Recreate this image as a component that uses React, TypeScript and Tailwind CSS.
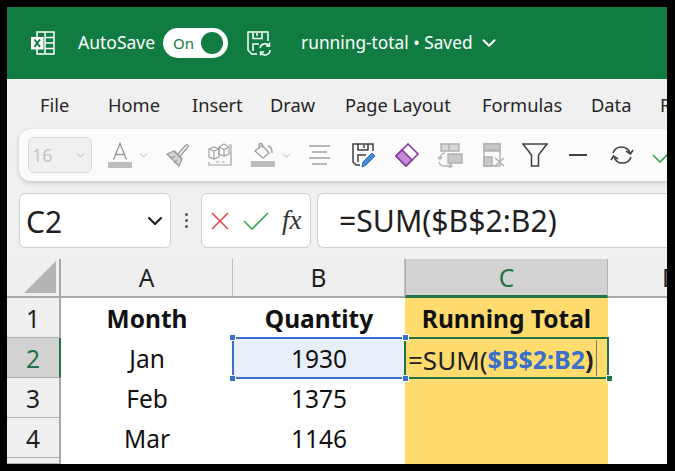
import { ChevronDown } from "lucide-react";

const font = { fontFamily: '"Noto Sans", "Open Sans", sans-serif' };

const tabs = [
  { label: "File", width: "w-[68px]" },
  { label: "Home", width: "w-[84px]" },
  { label: "Insert", width: "w-[78px]" },
  { label: "Draw", width: "w-[75px]" },
  { label: "Page Layout", width: "w-[137px]" },
  { label: "Formulas", width: "w-[109px]" },
  { label: "Data", width: "w-[69px]" },
  { label: "Review", width: "w-[80px]" },
];

function ExcelLogo() {
  return (
    <svg width="24" height="24" viewBox="0 0 24 24" fill="none" stroke="white" strokeWidth="1.500">
      <path d="M6 1h17v22H6z" />
      <path d="M14 1v22M14 6.500h9M14 12h9M14 17.500h9" />
      <path d="M0 6h12.500v12.500H0z" fill="white" stroke="none" />
      <path d="M3.500 8.500l5.500 7.500M9 8.500l-5.500 7.500" stroke="#107C41" strokeWidth="2" />
    </svg>
  );
}

function SaveSync() {
  return (
    <svg width="26" height="26" viewBox="0 0 26 26" fill="none" stroke="white" strokeWidth="1.500">
      <path d="M11 24H5.500L2 20V2h20v9" />
      <path d="M7 2v6.500h9V2M11 3v3" />
      <path d="M7 21v-7h6" />
      <path d="M14 18a5 5 0 0 1 9-2M24 20a5 5 0 0 1-9 3" />
      <path d="M23.500 12.500V16h-3.500M14.500 25.500V22h3.500" />
    </svg>
  );
}

function Toggle() {
  return (
    <div className="flex h-[30px] w-[65px] items-center justify-between rounded-full bg-white pl-[10px] pr-[5px]">
      <span className="text-[15px] leading-none text-[#107C41]">On</span>
      <span className="h-[22px] w-[22px] rounded-full bg-[#107C41]" />
    </div>
  );
}

function ColorA() {
  return (
    <svg width="24" height="26" viewBox="0 0 24 26" fill="none">
      <path d="M5.500 17.500L12 1.500l6.500 16M8 12.500h8" stroke="#9a9a9a" strokeWidth="1.400" />
      <rect x="0" y="20" width="24" height="6" fill="#bdbdbd" />
    </svg>
  );
}

function Brush() {
  return (
    <svg width="24" height="24" viewBox="0 0 24 24" fill="none" stroke="#9a9a9a" strokeWidth="1.300">
      <path d="M1 11l7-3 8 8-3 7z" fill="#d4d4d4" />
      <path d="M8 8l8 8M12 11l8-9c1-1 3 1 2 2l-8 9" />
      <path d="M5 15l4-2M8 20l3-3" />
    </svg>
  );
}

function Boxes() {
  return (
    <svg width="24" height="24" viewBox="0 0 24 24" fill="none" stroke="#a3a3a3" strokeWidth="1.200">
      <path d="M1 6l5-2 5 2v8l-5 2-5-2zM1 6l5 2 5-2M6 8v8" />
      <path d="M11 4l5-3 5 3v7l-5 2-5-2zM11 4l5 2.500L21 4M16 6.500V13" />
      <path d="M21 2h2v20H1v-3M8 19h3M14 19h3" />
    </svg>
  );
}

function Bucket() {
  return (
    <svg width="24" height="26" viewBox="0 0 24 26" fill="none" stroke="#a3a3a3" strokeWidth="1.400">
      <path d="M4 9l7-6 7 8-6 5z" />
      <path d="M8 7V2.500a2 2 0 0 1 3.500 0V6" />
      <path d="M17 4c3 0 4 3 4 7" />
      <rect x="0" y="19" width="24" height="6" fill="#bdbdbd" stroke="none" />
    </svg>
  );
}

function AlignLines() {
  return (
    <svg width="23" height="22" viewBox="0 0 23 22" stroke="#a3a3a3" strokeWidth="1.600">
      <path d="M1 2h21M4 8h15M1 14h21M4 20h15" />
    </svg>
  );
}

function SavePen() {
  return (
    <svg width="26" height="26" viewBox="0 0 26 26" fill="none">
      <path d="M10 23H6l-3-3V2h20v7" stroke="#3f3f3f" strokeWidth="1.500" />
      <path d="M8 2v6h10V2M14 3v3M8 20v-7h8" stroke="#3f3f3f" strokeWidth="1.500" />
      <path d="M12 25l1-5 9-9 3 3-9 9z" fill="#3f8fd8" stroke="#1f6fb8" strokeWidth="1" />
    </svg>
  );
}

function Eraser() {
  return (
    <svg width="24" height="24" viewBox="0 0 24 24" fill="none">
      <path d="M1 13L13 1l10 10-12 12z" fill="white" stroke="#8a3aa0" strokeWidth="1.600" />
      <path d="M1 13l6-6 10 10-6 6z" fill="#c58ad6" stroke="#8a3aa0" strokeWidth="1.600" />
    </svg>
  );
}

function TableMove() {
  return (
    <svg width="26" height="25" viewBox="0 0 26 25" fill="none" stroke="#b0b0b0" strokeWidth="1.400">
      <path d="M4 1h18v7H4zM12 1v7" fill="#d8d8d8" />
      <path d="M11 11h14v9H11z" fill="#c9c9c9" />
      <path d="M8 10a6 6 0 0 0-5 6l2-2M3 16l-2-2M2 19a5 5 0 0 0 6 4h7M12 20l3 3-3 2" />
    </svg>
  );
}

function TableX() {
  return (
    <svg width="22" height="24" viewBox="0 0 22 24" fill="none" stroke="#b0b0b0" strokeWidth="1.400">
      <path d="M1 1h16v22H1z" />
      <path d="M1 1h16v6H1zM1 14h8v9H1z" fill="#c9c9c9" />
      <path d="M1 8h16M12 15l9 8M21 15l-9 8" />
    </svg>
  );
}

function Funnel() {
  return (
    <svg width="26" height="24" viewBox="0 0 26 24" fill="none" stroke="#3f3f3f" strokeWidth="1.500">
      <path d="M1 1h24l-8.500 11v11h-7V12z" />
    </svg>
  );
}

function Refresh() {
  return (
    <svg width="24" height="22" viewBox="0 0 24 22" fill="none" stroke="#3f3f3f" strokeWidth="1.600">
      <path d="M3 9a9 9 0 0 1 17 0M21 13a9 9 0 0 1-17 0" />
      <path d="M16 7l4.500 3L23 6M8 15l-4.500-3L1 16" />
    </svg>
  );
}

function SmallCaret() {
  return <ChevronDown size={13} strokeWidth={1.500} className="text-[#a8a8a8]" />;
}

function Toolbar() {
  return (
    <div className="flex h-[52px] items-center rounded-l-[12px] bg-[#fbfbfb] pl-[9px] shadow-[0_2px_5px_rgba(0,0,0,0.18)]">
      <div className="flex h-[36px] w-[64px] shrink-0 items-center justify-between rounded-[6px] border border-[#dcdcdc] bg-[#f0f0f0] pl-[3px] pr-[4px]">
        <span className="text-[18px] leading-none text-[#c4c4c4]">16</span>
        <SmallCaret />
      </div>
      <div className="ml-[16px] shrink-0"><ColorA /></div>
      <div className="ml-[5px] shrink-0"><SmallCaret /></div>
      <div className="ml-[16px] shrink-0"><Brush /></div>
      <div className="ml-[18px] shrink-0"><Boxes /></div>
      <div className="ml-[19px] shrink-0"><Bucket /></div>
      <div className="ml-[5px] shrink-0"><SmallCaret /></div>
      <div className="ml-[15px] shrink-0"><AlignLines /></div>
      <div className="ml-[19px] shrink-0"><SavePen /></div>
      <div className="ml-[19px] shrink-0"><Eraser /></div>
      <div className="ml-[18px] shrink-0"><TableMove /></div>
      <div className="ml-[20px] shrink-0"><TableX /></div>
      <div className="ml-[17px] shrink-0"><Funnel /></div>
      <div className="ml-[21px] h-[2px] w-[18px] shrink-0 bg-[#3f3f3f]" />
      <div className="ml-[23px] shrink-0"><Refresh /></div>
      <svg className="ml-[18px] shrink-0" width="24" height="18" viewBox="0 0 24 18" fill="none" stroke="#3aa655" strokeWidth="1.600">
        <path d="M1 9l7 7L23 1" />
      </svg>
    </div>
  );
}

function FormulaBar() {
  return (
    <div className="mt-[12px] flex h-[55px] items-stretch">
      <div className="flex w-[152px] shrink-0 items-center justify-between rounded-[6px] border border-[#d0d0d0] bg-white pl-[6px] pr-[3px]">
        <span className="pt-[2px] text-[30px] leading-none text-[#1f1f1f]">C2</span>
        <ChevronDown size={24} strokeWidth={2.200} className="text-[#222]" />
      </div>
      <div className="flex w-[30px] shrink-0 flex-col items-center justify-center gap-[3px]">
        <span className="h-[3px] w-[3px] rounded-full bg-[#555]" />
        <span className="h-[3px] w-[3px] rounded-full bg-[#555]" />
        <span className="h-[3px] w-[3px] rounded-full bg-[#555]" />
      </div>
      <div className="flex w-[110px] shrink-0 items-center rounded-[6px] border border-[#d0d0d0] bg-white pl-[8px]">
        <svg width="20" height="20" viewBox="0 0 20 20" stroke="#e4484a" strokeWidth="1.600">
          <path d="M2 2l16 16M18 2L2 18" />
        </svg>
        <svg className="ml-[13px]" width="26" height="20" viewBox="0 0 26 20" fill="none" stroke="#3aa655" strokeWidth="1.600">
          <path d="M1 10l8 8L25 2" />
        </svg>
        <span className="ml-[13px] text-[27px] italic leading-none text-[#333]" style={{ fontFamily: '"Liberation Serif", serif' }}>
          fx
        </span>
      </div>
      <div className="ml-[6px] flex flex-1 items-center rounded-l-[6px] border border-r-0 border-[#d0d0d0] bg-white pl-[21px]">
        <span className="pt-[2px] text-[30.200px] leading-none text-[#1f1f1f]">=SUM($B$2:B2)</span>
      </div>
    </div>
  );
}

function ColHeader({ label, active }: { label: string; active?: boolean }) {
  return (
    <div
      className={
        active
          ? "flex items-center justify-center border-x border-b-[3px] border-x-[#b0b0b0] border-b-[#217346] bg-[#d2d2d2] pt-[2px] text-[24.500px] leading-none text-[#217346]"
          : "flex items-center justify-center border-r border-b-2 border-r-[#bdbdbd] border-b-[#a8a8a8] bg-[#efefef] pt-[2px] text-[24.500px] leading-none text-[#1f1f1f]"
      }
    >
      {label}
    </div>
  );
}

function RowHeader({ label, active }: { label: string; active?: boolean }) {
  return (
    <div
      className={
        active
          ? "flex items-center justify-center border-r-[2px] border-b border-r-[#217346] border-b-[#b0b0b0] bg-[#d2d2d2] pt-[3px] text-[24.500px] leading-none text-[#217346]"
          : "flex items-center justify-center border-r-[2px] border-b border-r-[#a8a8a8] border-b-[#b0b0b0] bg-[#efefef] pt-[3px] text-[24.500px] leading-none text-[#1f1f1f]"
      }
    >
      {label}
    </div>
  );
}

function Cell({ children, bold, fill }: { children?: React.ReactNode; bold?: boolean; fill?: boolean }) {
  return (
    <div
      className={`flex items-center justify-center whitespace-nowrap pt-[3px] text-[24.500px] leading-none text-[#111] ${bold ? "font-bold" : ""} ${fill ? "bg-[#FFDC6D]" : "bg-white"}`}
    >
      {children}
    </div>
  );
}

function Handle({ className }: { className: string }) {
  return <span className={`absolute h-[7px] w-[7px] border border-white bg-[#3a6fcc] ${className}`} />;
}

function Sheet() {
  return (
    <div className="mt-[11px] grid min-h-0 flex-1 grid-cols-[54px_172px_172px_203px_1fr] grid-rows-[39px_40px_40px_40px_40px_1fr] overflow-hidden">
      <div className="flex items-end justify-end border-r-2 border-b-2 border-r-[#a8a8a8] border-b-[#a8a8a8] bg-[#efefef] pr-[3px] pb-[3px]">
        <svg width="32" height="32" viewBox="0 0 32 32">
          <path d="M32 0v32H0z" fill="#b4b4b4" />
        </svg>
      </div>
      <ColHeader label="A" />
      <ColHeader label="B" />
      <ColHeader label="C" active />
      <div className="flex items-center border-b-2 border-b-[#a8a8a8] bg-[#efefef] pt-[2px] pl-[54px] text-[24.500px] leading-none text-[#1f1f1f]">D</div>

      <RowHeader label="1" />
      <Cell bold>Month</Cell>
      <Cell bold>Quantity</Cell>
      <Cell bold fill>Running Total</Cell>
      <Cell />

      <RowHeader label="2" active />
      <Cell>Jan</Cell>
      <div className="relative flex items-center justify-center bg-[#E8EFF8] pt-[3px] text-[24.500px] leading-none text-[#111]">
        1930
        <div className="absolute inset-[-1px] border-[2px] border-[#3a6fcc]" />
        <Handle className="top-[-4px] left-[-4px]" />
        <Handle className="bottom-[-4px] left-[-4px]" />
        <Handle className="top-[-4px] right-[-4px] z-20" />
        <Handle className="right-[-4px] bottom-[-4px] z-20" />
      </div>
      <div className="relative flex items-center whitespace-nowrap bg-[#FFDC6D] pl-[3px] text-[26px] leading-none text-[#222]">
        <span className="pt-[3px]">=SUM(</span>
        <span className="pt-[3px] text-[25px] font-bold text-[#3a6fcc]">$B$2:B2</span>
        <span className="pt-[3px] text-[25px] font-bold">)</span>
        <span className="ml-[2px] h-[36px] w-px bg-[#777]" />
        <div className="absolute inset-[-1px] z-10 border-[2px] border-[#217346]" />
        <span className="absolute right-[-5px] bottom-[-4px] z-20 h-[7px] w-[7px] border border-white bg-[#217346]" />
      </div>
      <Cell />

      <RowHeader label="3" />
      <Cell>Feb</Cell>
      <Cell>1375</Cell>
      <Cell fill />
      <Cell />

      <RowHeader label="4" />
      <Cell>Mar</Cell>
      <Cell>1146</Cell>
      <Cell fill />
      <Cell />

      <RowHeader label="" />
      <Cell />
      <Cell />
      <Cell fill />
      <Cell />
    </div>
  );
}

export default function App() {
  return (
    <div className="h-[471px] w-[675px] overflow-hidden bg-black pt-[7px] pr-[8px] pb-[7px] pl-[7px]" style={font}>
      <div className="flex h-full flex-col overflow-hidden bg-[#f0f0f0]">
        <div className="flex h-[72px] shrink-0 items-center bg-[#107C41] pl-[24px] text-white">
          <ExcelLogo />
          <span className="ml-[23px] text-[17.500px] leading-none">AutoSave</span>
          <div className="ml-[8px]"><Toggle /></div>
          <div className="ml-[18px]"><SaveSync /></div>
          <span className="ml-[29px] text-[17.300px] leading-none">running-total • Saved</span>
          <ChevronDown size={22} strokeWidth={2.200} className="ml-[5px]" />
        </div>

        <div className="flex h-[50px] shrink-0 items-center overflow-hidden pt-[3px] pl-[33px] text-[18.300px] leading-none text-[#262626]">
          {tabs.map((t) => (
            <span key={t.label} className={`shrink-0 ${t.width}`}>{t.label}</span>
          ))}
        </div>

        <div className="flex shrink-0 flex-col pl-[12px]">
          <Toolbar />
          <FormulaBar />
        </div>

        <Sheet />
      </div>
    </div>
  );
}
